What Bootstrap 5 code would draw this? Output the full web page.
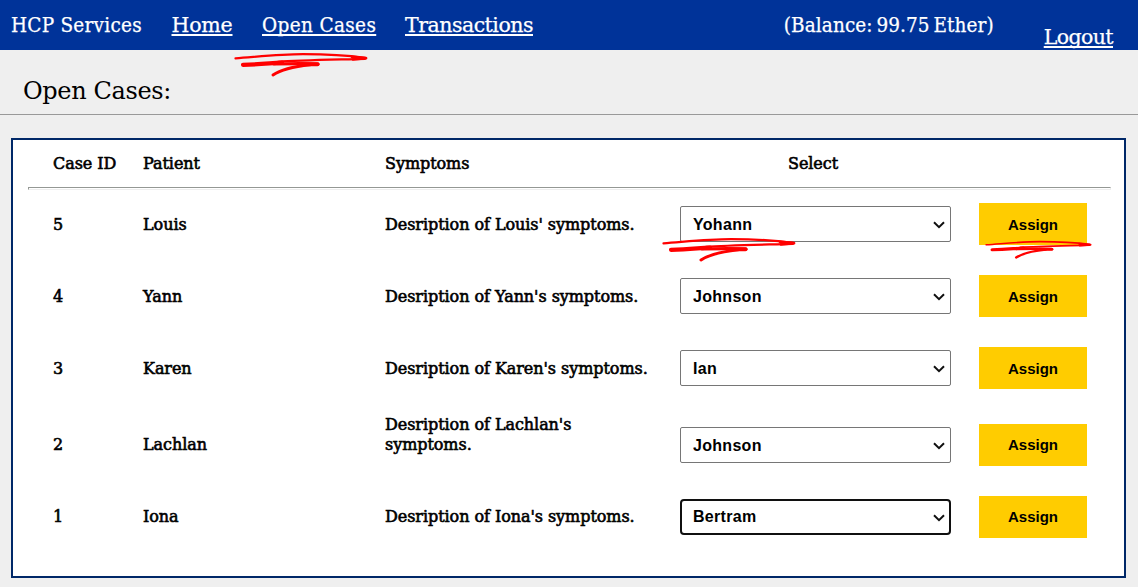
<!DOCTYPE html>
<html lang="en">
<head>
<meta charset="utf-8">
<meta name="viewport" content="width=device-width, initial-scale=1">
<title>HCP Services</title>
<link rel="stylesheet" href="https://cdn.jsdelivr.net/npm/bootstrap@5.3.0/dist/css/bootstrap.min.css">
<style>
body{background:#efefef;color:#000;font-family:"DejaVu Serif",serif;overflow:hidden}
.topbar{background:#039;height:50px;font-size:20.5px;line-height:50px;color:#fff;white-space:nowrap;padding:0 25px 0 11px;-webkit-text-stroke:.25px #fff}
.topbar a{color:#fff;text-decoration-thickness:2px;text-underline-offset:2px;text-decoration-skip-ink:none}
.narrow{font-family:"DejaVu Serif Condensed","DejaVu Serif",serif;font-stretch:condensed}
.brand-text{width:160.5px;letter-spacing:.25px}.link-home{width:90.5px;letter-spacing:-.2px}.link-cases{width:143px;letter-spacing:.37px}
.link-trans{letter-spacing:-.5px}
.balance{letter-spacing:.1px;word-spacing:-2.2px}
.logout{padding-top:12px;margin-left:50px;letter-spacing:-.6px}
.page-title{height:65px;border-bottom:1px solid #999;padding:26px 0 0 23px;font-size:24px;line-height:30px;font-weight:400;letter-spacing:-.35px}
.panel{margin:23px 12px 0 11px;height:440px;border:2px solid #002868;background:#fff;padding:0 14px 0 15px}
.case-row{display:grid;grid-template-columns:90px 242px 295px 299px 108px;padding-left:25px;height:72px;align-items:center;font-size:16px;line-height:20px;letter-spacing:-.06px;-webkit-text-stroke:.6px #000}
.case-head{height:47px}
.case-id,.patient,.symptoms{padding-top:1px}
.select-head{padding-left:108px}
.rule{height:3px;margin:0 -1px -2px 0;border:1px solid;border-color:#949894 #eee #eee #949894}
.two-line{margin-top:-20px}
.late{margin-top:5px}
.pick{width:271px;height:36px;border:1px solid #767676;border-radius:2px;color:#000;padding:1px 30px 0 12px;font:bold 16px/32px "Liberation Sans",Arial,sans-serif;letter-spacing:.3px;-webkit-text-stroke:0;background:#fff url("data:image/svg+xml,%3Csvg xmlns='http://www.w3.org/2000/svg' viewBox='0 0 12 8'%3E%3Cpath d='M1 1.2 6 6.2 11 1.2' fill='none' stroke='%23111' stroke-width='2'/%3E%3C/svg%3E") no-repeat right 5px top 14px/12px 8px}
.pick.current{border:2px solid #101010;border-radius:4px;padding:0 30px 1px 11px;line-height:30px;background-position:right 4px top 13px}
.assign{width:108px;height:42px;border:0;border-radius:0;background:#fc0;color:#000;font:bold 15px/42px "Liberation Sans",Arial,sans-serif;padding:1px 0 0;letter-spacing:0;-webkit-text-stroke:0}
.late .assign,.late + .case-row .assign{padding:0}
.scribble{position:absolute;overflow:visible;fill:none;stroke:red;stroke-linecap:round;stroke-linejoin:round;pointer-events:none;z-index:2;-webkit-text-stroke:0}
.under-link{left:-28px;top:51.5px}.under-pick{left:-18px;top:31px}.under-assign{left:5.5px;top:36.5px}
</style>
</head>
<body>
<svg width="0" height="0" class="position-absolute"><defs><g id="scrawl">
<path stroke-width="2.2" d="M1.5 6.3C25 4.6 46 2.2 69 2.2S118 4 131 5.8"/>
<path stroke-width="2.8" d="M118 4.9 132 6.2 119 7.3"/>
<path stroke-width="2.2" d="M131 6.8C105 7.6 65 8.2 44 9.8"/>
<path stroke-width="4.2" d="M9 12.8C26 12.4 34 11.4 48 10.6"/>
<path stroke-width="3.2" d="M40 12C54 11.6 68 11.2 84 12"/>
<path stroke-width="4" d="M68 12.2H83.5"/>
<path stroke-width="3" d="M39 23C47 17.6 60 14.6 76 12.8"/>
</g></defs></svg>
<nav class="topbar d-flex">
<div class="brand-text narrow">HCP Services</div>
<div class="link-home"><a href="#">Home</a></div>
<div class="link-cases narrow position-relative"><a href="#">Open Cases</a>
<svg class="scribble under-link" width="134" height="25"><use href="#scrawl"/></svg></div>
<div class="link-trans"><a href="#">Transactions</a></div>
<div class="balance narrow ms-auto">(Balance: 99.75 Ether)</div>
<div class="logout"><a href="#">Logout</a></div>
</nav>
<h1 class="page-title m-0">Open Cases:</h1>
<main class="panel">
<div class="case-row case-head"><div>Case ID</div><div>Patient</div><div>Symptoms</div><div class="select-head">Select</div><div></div></div>
<div class="rule"></div>
<div class="case-row"><div class="case-id">5</div><div class="patient">Louis</div><div class="symptoms">Desription of Louis' symptoms.</div>
<div class="position-relative"><select class="form-select pick"><option>Yohann</option></select><svg class="scribble under-pick" width="134" height="25"><use href="#scrawl"/></svg></div>
<div class="position-relative"><button class="btn assign">Assign</button><svg class="scribble under-assign" width="107" height="19" viewBox="0 0 134 25" preserveAspectRatio="none"><use href="#scrawl"/></svg></div></div>
<div class="case-row"><div class="case-id">4</div><div class="patient">Yann</div><div class="symptoms">Desription of Yann's symptoms.</div><div><select class="form-select pick"><option>Johnson</option></select></div><div><button class="btn assign">Assign</button></div></div>
<div class="case-row"><div class="case-id">3</div><div class="patient">Karen</div><div class="symptoms">Desription of Karen's symptoms.</div><div><select class="form-select pick"><option>Ian</option></select></div><div><button class="btn assign">Assign</button></div></div>
<div class="case-row late"><div>2</div><div>Lachlan</div><div class="two-line">Desription of Lachlan's<br>symptoms.</div><div><select class="form-select pick"><option>Johnson</option></select></div><div><button class="btn assign">Assign</button></div></div>
<div class="case-row"><div>1</div><div>Iona</div><div>Desription of Iona's symptoms.</div><div><select class="form-select pick current"><option>Bertram</option></select></div><div><button class="btn assign">Assign</button></div></div>
</main>
<script src="https://cdn.jsdelivr.net/npm/bootstrap@5.3.0/dist/js/bootstrap.bundle.min.js"></script>
</body>
</html>
